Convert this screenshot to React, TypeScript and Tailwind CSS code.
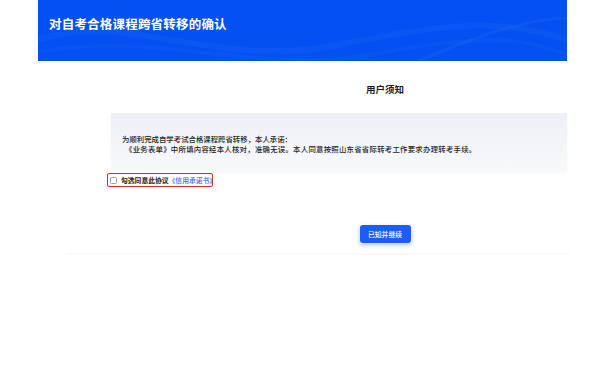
const cjk = { fontFamily: '"Noto Sans CJK SC", "Noto Sans", sans-serif' };

const HeaderWaves = () => (
  <svg
    className="absolute inset-0 h-full w-full"
    viewBox="0 0 529 61"
    preserveAspectRatio="none"
    fill="none"
  >
    <path d="M0 40 C 90 10, 180 70, 300 45 S 470 20, 529 40" stroke="#ffffff" strokeOpacity="0.03" strokeWidth="6" />
    <path d="M0 52 C 120 30, 220 75, 330 55 S 480 35, 529 55" stroke="#ffffff" strokeOpacity="0.025" strokeWidth="4" />
    <path d="M380 61 C 430 40, 480 20, 529 18" stroke="#ffffff" strokeOpacity="0.04" strokeWidth="3" />
  </svg>
);

export default function App() {
  return (
    <div className="min-h-[388px] w-[613px] overflow-hidden bg-white" style={cjk}>
      <div className="relative ml-[38px] h-[61px] w-[529px] overflow-hidden bg-[#0450f2]">
        <HeaderWaves />
        <h1 className="relative pl-[11px] pt-[15px] text-[12.5px] font-bold leading-[18px] tracking-[0.2px] text-white">
          对自考合格课程跨省转移的确认
        </h1>
      </div>

      <div className="ml-[157px] mt-[22px] text-center text-[9.5px] font-bold leading-[13px] text-[#1a1a1a]">
        用户须知
      </div>

      <div className="ml-[111px] mt-[17px] w-[456px] bg-gradient-to-b from-[#eceff6] to-[#f8f9fb] pb-[17px] pl-[11px] pt-[21px] text-[7.4px] font-medium leading-[10px] text-[#1f1f1f] shadow-[0_2px_4px_rgba(0,0,0,0.03)]">
        <p>为顺利完成自学考试合格课程跨省转移，本人承诺：</p>
        <p className="pl-[3px] tracking-[0.25px]">
          《业务表单》中所填内容经本人核对，准确无误。本人同意按照山东省省际转考工作要求办理转考手续。
        </p>
      </div>

      <div className="ml-[107px] mt-[2px] flex h-[14px] w-[106px] items-center gap-[4px] rounded-[2px] border-[1.5px] border-[#e3262d] pl-[2px]">
        <span className="h-[7px] w-[7px] shrink-0 rounded-[1.5px] border border-[#9aa3b5] bg-white" />
        <span className="whitespace-nowrap text-[6.8px] font-bold leading-none text-[#222]">
          勾选同意此协议
          <span className="font-medium text-[#2e6bf0]">《信用承诺书》</span>
        </span>
      </div>

      <div className="ml-[157px] mt-[38px] flex justify-center">
        <button className="flex h-[18px] w-[51px] items-center justify-center rounded-[3px] bg-[#1d5cf5] text-[6.8px] font-medium leading-none text-white shadow-[0_2px_5px_rgba(29,92,245,0.35)]">
          已知并继续
        </button>
      </div>

      <div className="ml-[66px] mt-[10px] h-[2px] w-[504px] bg-[#fafafa]" />
    </div>
  );
}
